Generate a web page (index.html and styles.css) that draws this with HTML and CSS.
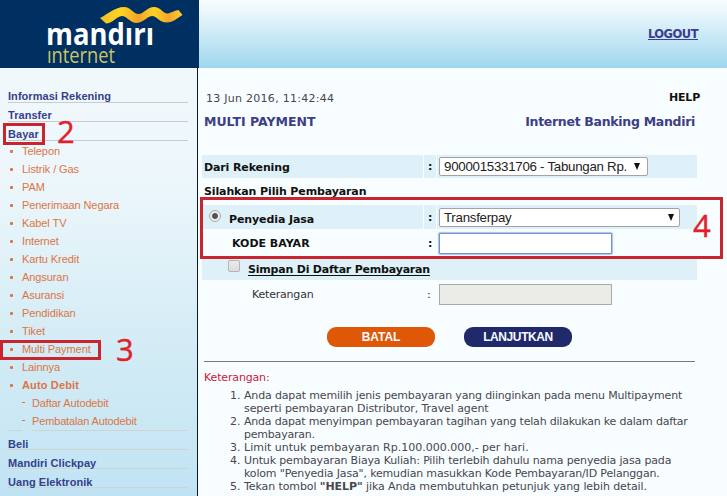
FILE: index.html
```html
<!DOCTYPE html>
<html lang="id">
<head>
<meta charset="utf-8">
<title>Mandiri Internet</title>
<link rel="stylesheet" href="styles.css">
</head>
<body>
<header class="header">
  <div class="brand">
    <svg width="199" height="68" viewBox="0 0 199 68" role="img">
      <defs>
        <linearGradient id="gold" x1="100" x2="183" y1="0" y2="0" gradientUnits="userSpaceOnUse">
          <stop offset="0" stop-color="#f3bd25"/><stop offset=".25" stop-color="#ffd522"/><stop offset=".46" stop-color="#f2a324"/><stop offset=".65" stop-color="#ffd226"/><stop offset=".83" stop-color="#f2a52a"/><stop offset="1" stop-color="#ffd52c"/>
        </linearGradient>
      </defs>
      <path fill="url(#gold)" d="M100 18C108 14 115 7 124 7C131 7 133 14 139 14C145 13 147 7 154 7C161 7 163 14 168 13.500C172 12.500 175 10 178.500 10L182.500 15C177 18 173 22.500 167 22.500C159 22.500 157 16 152 16C146 17 143 23 136 23C129 22 127 16 122 16C116 17 112 23.500 106 23.500Z"/>
      <text class="logo-name" x="46" y="45" textLength="108" lengthAdjust="spacingAndGlyphs">mandırı</text>
      <text class="logo-sub" x="47" y="62.500" textLength="68" lengthAdjust="spacingAndGlyphs">ınternet</text>
    </svg>
  </div>
  <a class="logout">LOGOUT</a>
</header>
<div class="page">
  <nav class="side">
    <div class="head">Informasi Rekening</div>
    <div class="head">Transfer</div>
    <div class="head">Bayar</div>
    <ul class="menu">
      <li>Telepon</li><li>Listrik / Gas</li><li>PAM</li><li>Penerimaan Negara</li><li>Kabel TV</li><li>Internet</li><li>Kartu Kredit</li><li>Angsuran</li><li>Asuransi</li><li>Pendidikan</li><li>Tiket</li><li>Multi Payment</li><li>Lainnya</li><li class="strong">Auto Debit</li>
      <li class="sub">Daftar Autodebit</li><li class="sub">Pembatalan Autodebit</li>
    </ul>
    <div class="split"><i></i><b></b></div>
    <div class="head low">Beli</div>
    <div class="head low">Mandiri Clickpay</div>
    <div class="head low">Uang Elektronik</div>
  </nav>
  <main class="main">
    <div class="info"><span class="date">13 Jun 2016, 11:42:44</span><span class="help">HELP</span></div>
    <div class="titles"><span class="t1">MULTI PAYMENT</span><span class="t2">Internet Banking Mandiri</span></div>
    <div class="form">
      <div class="row tint r1"><div class="label"><span class="dari">Dari Rekening</span></div><div class="colon">:</div><div class="field"><div class="select s1"><span>9000015331706 - Tabungan Rp.</span><i class="arrow"></i></div></div></div>
      <div class="pick"><span>Silahkan Pilih Pembayaran</span></div>
      <div class="row tint r2"><div class="label"><i class="radio"></i><span class="jasa">Penyedia Jasa</span></div><div class="colon">:</div><div class="field"><div class="select s2"><span>Transferpay</span><i class="arrow"></i></div></div></div>
      <div class="row r3"><div class="label"><span class="kode">KODE BAYAR</span></div><div class="colon">:</div><div class="field"><div class="input focus"></div></div></div>
      <div class="row tint r4"><i class="check"></i><span class="simpan">Simpan Di Daftar Pembayaran</span></div>
      <div class="row r5"><div class="label"><span class="ket">Keterangan</span></div><div class="colon thin">:</div><div class="field"><div class="input off"></div></div></div>
    </div>
    <div class="buttons"><div class="btn cancel">BATAL</div><div class="btn next">LANJUTKAN</div></div>
    <div class="rule"></div>
    <div class="note">Keterangan:</div>
    <ol class="notes">
      <li><span class="tight">Anda dapat memilih jenis pembayaran yang diinginkan pada menu Multipayment</span><br><span class="snug">seperti pembayaran Distributor, Travel agent</span></li>
      <li><span class="tighter">Anda dapat menyimpan pembayaran tagihan yang telah dilakukan ke dalam daftar</span><br><span class="tighter">pembayaran.</span></li>
      <li><span>Limit untuk pembayaran Rp.100.000.000,- per hari.</span></li>
      <li><span class="tight">Untuk pembayaran Biaya Kuliah: Pilih terlebih dahulu nama penyedia jasa pada</span><br><span class="tight">kolom "Penyedia Jasa", kemudian masukkan Kode Pembayaran/ID Pelanggan.</span></li>
      <li><span class="snug">Tekan tombol <b>"HELP"</b> jika Anda membutuhkan petunjuk yang lebih detail.</span></li>
    </ol>
  </main>
</div>
<div class="mark m2"></div><div class="num n2">2</div>
<div class="mark m3"></div><div class="num n3">3</div>
<div class="mark m4"></div><div class="num n4">4</div>
</body>
</html>
```
FILE: styles.css
```css
* { box-sizing: border-box; }
body { margin: 0; width: 727px; height: 496px; overflow: hidden; position: relative; background: #f8fdff; font: 11px/13px "DejaVu Sans", sans-serif; color: #47474d; white-space: nowrap; }
.header { height: 68px; display: flex; justify-content: space-between; background: linear-gradient(#f8fdff 0, #e8f6fc 20%, #9fd6ed 100%); }
.brand { width: 199px; height: 68px; background: #002f62; }
.brand svg { display: block; }
.logo-name { font: 700 31px "Open Sans", sans-serif; fill: #fff; }
.logo-sub { font: 400 22px "Open Sans", sans-serif; fill: #cdc565; }
.logout { margin: 27px 29px 0 0; font-weight: bold; font-size: 11.5px; line-height: 14px; color: #3d3d8c; text-decoration: underline; letter-spacing: -0.5px; }
.page { display: flex; height: 428px; }
.side { width: 198px; border-right: 1px solid #101820; padding: 16px 9px 0 8px; background: linear-gradient(#f1f8fc 0, #edf7fb 25%, #e3f3f9 40%, #d6edf6 60%, #c9e7f4 85%, #c0e3f4 100%); font-family: "Liberation Sans", sans-serif; }
.head { height: 19px; padding-top: 6px; border-bottom: 1px solid #c5cdd2; font-weight: bold; line-height: 12px; color: #35408c; letter-spacing: .05px; }
.head.low { border-color: #cfd3d2; padding-top: 7px; }
.menu { list-style: none; margin: 1px 0 0; padding: 0; color: #dd7444; }
.menu li { height: 18px; line-height: 18px; padding-left: 14px; display: flex; letter-spacing: -.08px; }
.menu li::before { content: ""; width: 3px; height: 3px; border-radius: 1px; background: #dd7444; margin: 8px 9px 0 -12px; }
.menu .strong { font-weight: bold; letter-spacing: .15px; }
.menu .sub { padding-left: 24px; letter-spacing: -.15px; }
.menu .sub::before { width: 3px; height: 1px; border-radius: 0; margin: 8px 7px 0 -10px; }
.split { display: flex; gap: 10px; height: 1px; }
.split i { width: 14px; background: #cfd3d2; }
.split b { flex: 1; background: #cfd3d2; }
.main { flex: 1; padding: 23px 0 0 4px; }
.info { display: flex; justify-content: space-between; padding: 0 27px 0 4px; height: 23px; }
.date { padding-top: 1px; letter-spacing: .27px; }
.help { font-weight: bold; color: #111; letter-spacing: -.2px; }
.titles { display: flex; justify-content: space-between; padding: 0 32px 0 2px; height: 41px; font-weight: bold; font-size: 12.5px; line-height: 15px; color: #3e3e86; }
.t2 { letter-spacing: -.3px; }
.form { width: 495px; font-weight: bold; color: #111; }
.row { display: flex; align-items: center; }
.row > div { height: 100%; display: flex; align-items: center; }
.label { width: 221px; padding-left: 2px; }
.dari { letter-spacing: -.12px; padding-top: 1px; }
.colon { width: 12px; margin: 0 1px; padding-left: 4px; }
.colon.thin { font-weight: normal; padding-left: 3px; }
.field { flex: 1; padding-left: 2px; }
.tint .label, .tint .colon, .tint .field, .r4 { background: #def1f9; }
.r1 { height: 23px; }
.pick { height: 27px; padding: 7px 0 0 2px; letter-spacing: -.12px; }
.r2 { height: 24px; }
.r3 { height: 28px; }
.r4 { height: 23px; padding-left: 26px; }
.r5 { height: 28px; }
.radio { width: 12px; height: 12px; border: 1px solid #aaa; border-radius: 50%; background: radial-gradient(circle, #555 0 2.5px, #eee 3.5px); margin: -3px 8px 0 5px; }
.jasa { padding-top: 4px; letter-spacing: -.1px; }
.kode { padding-left: 28px; }
.ket { padding-left: 48px; font-weight: normal; color: #333; letter-spacing: -.2px; }
.check { width: 12px; height: 12px; border: 1px solid #b4b4b4; border-radius: 2px; background: linear-gradient(#ececec, #ddd); margin: -5px 8px 0 0; }
.simpan { padding-top: 2px; text-decoration: underline; text-underline-offset: 2px; letter-spacing: -.2px; }
.select { display: flex; align-items: center; justify-content: space-between; height: 19px; border: 1px solid #a3a3a3; border-radius: 2px; background: #fff; padding: 0 5px 0 4px; font: 13.3px/17px "Liberation Sans", sans-serif; letter-spacing: -.27px; color: #222; }
.s1 { width: 209px; }
.s2 { width: 241px; }
.s1 .arrow { margin-right: 2px; }
.arrow { border: 3.5px solid transparent; border-top: 7px solid #111; border-bottom: 0; }
.input { width: 173px; height: 21px; border: 1px solid #a9a9a9; }
.input.focus { border: 1px solid #6f94cf; box-shadow: 0 0 1px 1px #a9c3ea; background: #fff; border-radius: 1px; }
.input.off { background: #ebebe7; }
.buttons { display: flex; gap: 29px; padding: 19px 0 0 125px; }
.btn { width: 108px; height: 20px; border-radius: 9px; text-align: center; font: bold 12px/20px "Liberation Sans", sans-serif; color: #f7fbff; }
.cancel { background: #df5808; letter-spacing: -.1px; }
.next { background: #20296a; letter-spacing: -.4px; }
.rule { width: 491px; height: 1px; margin: 14px 0 0 2px; background: #77777d; }
.note { margin: 9px 0 0 2px; color: #c8203c; letter-spacing: -.15px; }
.notes { margin: 5px 0 0; padding: 0 0 0 42px; }
.snug { letter-spacing: -.09px; }
.tight { letter-spacing: -.16px; }
.tighter { letter-spacing: -.21px; }
.mark { position: absolute; border: 3px solid #c8252f; }
.m2 { left: 3px; top: 123px; width: 42px; height: 22px; }
.m3 { left: 0; top: 340px; width: 101px; height: 20px; }
.m4 { left: 200px; top: 197px; width: 523px; height: 62px; }
.num { position: absolute; font: 31px/40px "Open Sans", sans-serif; color: #e0202b; -webkit-text-stroke: .4px #e0202b; }
.n2 { left: 57px; top: 111px; }
.n3 { left: 116px; top: 329px; }
.n4 { left: 693px; top: 205px; }
```
